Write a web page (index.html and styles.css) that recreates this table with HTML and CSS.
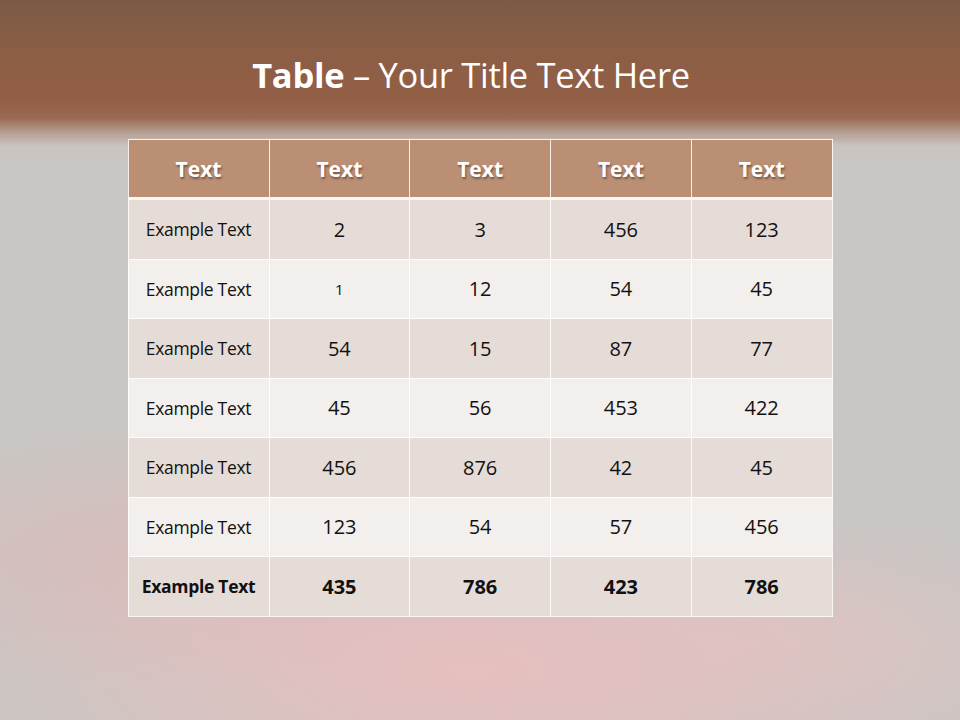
FILE: index.html
```html
<!DOCTYPE html>
<html>
<head>
<meta charset="utf-8">
<link rel="stylesheet" href="styles.css">
</head>
<body>
<div class="slide">
  <h1 class="title"><b>Table</b> – Your Title Text Here</h1>
  <table class="grid">
    <thead>
      <tr><th>Text</th><th>Text</th><th>Text</th><th>Text</th><th>Text</th></tr>
    </thead>
    <tbody>
      <tr class="odd"><td class="lbl">Example Text</td><td>2</td><td>3</td><td>456</td><td>123</td></tr>
      <tr class="even"><td class="lbl">Example Text</td><td class="small">1</td><td>12</td><td>54</td><td>45</td></tr>
      <tr class="odd"><td class="lbl">Example Text</td><td>54</td><td>15</td><td>87</td><td>77</td></tr>
      <tr class="even"><td class="lbl">Example Text</td><td>45</td><td>56</td><td>453</td><td>422</td></tr>
      <tr class="odd"><td class="lbl">Example Text</td><td>456</td><td>876</td><td>42</td><td>45</td></tr>
      <tr class="even"><td class="lbl">Example Text</td><td>123</td><td>54</td><td>57</td><td>456</td></tr>
      <tr class="odd total"><td class="lbl">Example Text</td><td>435</td><td>786</td><td>423</td><td>786</td></tr>
    </tbody>
  </table>
</div>
</body>
</html>
```
FILE: styles.css
```css
html, body {
  margin: 0;
  padding: 0;
}
body {
  width: 960px;
  height: 720px;
  overflow: hidden;
  font-family: "Open Sans", Lato, sans-serif;
}
.slide {
  width: 960px;
  height: 720px;
  display: flex;
  flex-direction: column;
  align-items: center;
  background:
    linear-gradient(180deg, #7b5a45 0px, #8b5e45 50px, #925f45 100px, #9a6a52 118px, #b49c90 132px, #c9c4c0 146px, rgba(202,198,195,0) 160px),
    radial-gradient(ellipse 520px 170px at 470px 670px, rgba(232,190,190,0.95), rgba(232,190,190,0) 100%),
    radial-gradient(ellipse 440px 130px at 230px 560px, rgba(220,184,184,0.85), rgba(220,184,184,0) 100%),
    radial-gradient(ellipse 380px 120px at 760px 640px, rgba(222,196,196,0.7), rgba(222,196,196,0) 100%),
    #cac6c3;
}
.title {
  margin: 0;
  height: 139px;
  box-sizing: border-box;
  padding-top: 52px;
  padding-right: 18px;
  font-size: 34.5px;
  line-height: 46px;
  font-weight: 400;
  color: #ffffff;
  text-align: center;
  letter-spacing: -0.3px;
}
.title b {
  font-weight: 700;
}
.grid {
  border-collapse: collapse;
  width: 705px;
  table-layout: fixed;
  color: #111;
}
.grid th, .grid td {
  border: 1px solid rgba(255,255,255,0.85);
  text-align: center;
  padding: 0;
}
.grid th {
  background: #bb8f74;
  color: #fff;
  font-size: 21px;
  font-weight: 700;
  height: 57px;
  text-shadow: 1px 2px 2px rgba(70,40,25,0.55);
  border-bottom: 3px solid #fbf8f6;
}
.grid th:first-child, .grid td:first-child {
  width: 140px;
}
.grid td {
  height: 58.5px;
  font-size: 20px;
}
.grid .odd td {
  background: #e5dcd7;
}
.grid .even td {
  background: #f3efec;
}
.grid td.lbl {
  font-size: 17.5px;
  letter-spacing: -0.3px;
}
.grid td.small {
  font-size: 15px;
}
.grid .total td {
  font-weight: 700;
}
```
